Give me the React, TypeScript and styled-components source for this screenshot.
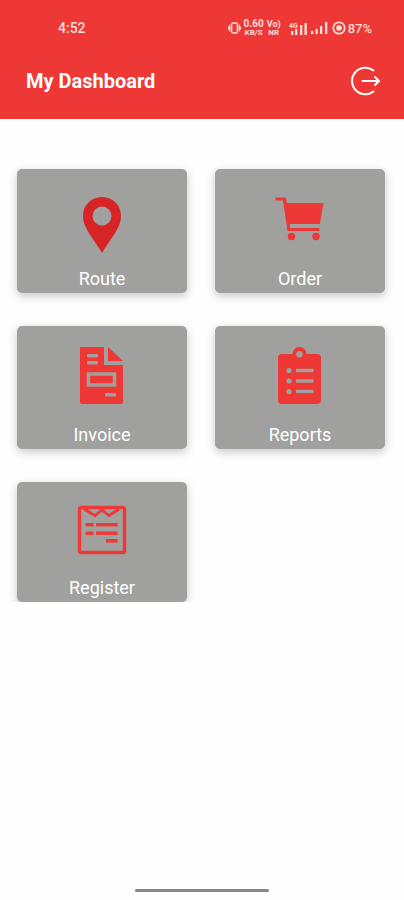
import React from "react";
import styled, { createGlobalStyle } from "styled-components";

const red = "#ee3835";
const grey = "#a0a09f";
const pale = "#ffdfdb";

const GlobalStyle = createGlobalStyle`
  * { box-sizing: border-box; }
  body {
    margin: 0;
    background: #fefefe;
    font-family: Roboto, "Liberation Sans", sans-serif;
  }
`;

const Page = styled.div`
  display: flex;
  flex-direction: column;
  min-height: 100vh;
`;

const Header = styled.header`
  background: ${red};
  padding: 16px 23px 20px 26px;
`;

const StatusBar = styled.div`
  display: flex;
  align-items: center;
  justify-content: space-between;
  height: 24px;
  padding: 0 9px 0 32px;
  color: ${pale};
`;

const Clock = styled.time`
  font-size: 14px;
  line-height: 24px;
  font-weight: 500;
`;

const StatusIcons = styled.div`
  display: flex;
  align-items: center;
  svg { display: block; }
`;

const Stack = styled.span<{ $left: number; $right: number }>`
  display: flex;
  flex-direction: column;
  align-items: center;
  margin: 0 ${(p) => p.$right}px 0 ${(p) => p.$left}px;
  font-weight: 700;
`;

const Tiny = styled.span<{ $size: number }>`
  font-size: ${(p) => p.$size}px;
  line-height: ${(p) => p.$size}px;
`;

const Battery = styled.span`
  margin-left: 2px;
  font-size: 13px;
  font-weight: 500;
`;

const TitleBar = styled.div`
  display: flex;
  align-items: center;
  justify-content: space-between;
  margin-top: 23px;
  height: 36px;
`;

const Title = styled.h1`
  margin: 0;
  color: #fff;
  font-size: 20px;
  line-height: 28px;
  font-weight: 700;
`;

const LogoutButton = styled.button`
  display: flex;
  padding: 0;
  border: 0;
  background: none;
  color: #fff;
  cursor: pointer;
`;

const Menu = styled.main`
  display: grid;
  grid-template-columns: 1fr 1fr;
  column-gap: 28px;
  row-gap: 33px;
  padding: 50px 19px 0 17px;
  overflow: hidden;
`;

const Tile = styled.button<{ $height: number }>`
  display: flex;
  flex-direction: column;
  align-items: center;
  justify-content: flex-end;
  gap: 11px;
  height: ${(p) => p.$height}px;
  padding: 0 0 3px;
  border: 0;
  border-radius: 5px;
  background: ${grey};
  box-shadow: 0 3px 10px rgba(0, 0, 0, 0.22);
  color: #fff;
  font-family: inherit;
  cursor: pointer;
`;

const TileLabel = styled.span`
  font-size: 18px;
  line-height: 22px;
`;

const Footer = styled.footer`
  display: flex;
  justify-content: center;
  margin-top: auto;
  padding-bottom: 8px;
`;

const HomeIndicator = styled.div`
  width: 134px;
  height: 3px;
  border-radius: 2px;
  background: #858585;
`;

const TileIcon = ({ children }: { children: React.ReactNode }) => (
  <svg width="64" height="72" viewBox="0 0 64 72" fill={red} aria-hidden="true">
    {children}
  </svg>
);

const RouteIcon = () => (
  <TileIcon>
    <path
      fill="#d72426"
      fillRule="evenodd"
      d="M32 12C21 12 13 20.500 13 31C13 43 23 53 32 68C41 53 51 43 51 31C51 20.500 43 12 32 12ZM32 21.500A9.500 9.500 0 1 1 32 40.500A9.500 9.500 0 1 1 32 21.500Z"
    />
  </TileIcon>
);

const OrderIcon = () => (
  <TileIcon>
    <path
      fillRule="evenodd"
      d="M7.500 12.500H17.800L18.900 18H55.500L51.800 39H51V43H51.500V46H19.500L15 15.500H7.500ZM22 39V43H51V39Z"
    />
    <circle cx="23.500" cy="51.500" r="3.700" />
    <circle cx="48" cy="51.500" r="3.700" />
  </TileIcon>
);

const InvoiceIcon = () => (
  <TileIcon>
    <path d="M11 6H34V24H53V61Q53 63 51 63H12Q10 63 10 61V7Q10 6 11 6Z" />
    <path d="M38 6L53 20H38Z" />
    <g fill={grey}>
      <rect x="17" y="13" width="11" height="3.500" rx="1" />
      <rect x="17" y="20" width="11" height="3.500" rx="1" />
      <rect x="35" y="52" width="11" height="3.500" rx="1" />
    </g>
    <rect x="18.500" y="33" width="26" height="11" fill="none" stroke={grey} strokeWidth="3.500" />
  </TileIcon>
);

const ReportsIcon = () => (
  <TileIcon>
    <path
      fillRule="evenodd"
      d="M14 13H24.500A7 7 0 0 1 38.500 13H49Q53 13 53 17V59Q53 63 49 63H14Q10 63 10 59V17Q10 13 14 13ZM31.500 10A3.200 3.200 0 1 0 31.500 16.400A3.200 3.200 0 1 0 31.500 10Z"
    />
    <g fill={grey}>
      <circle cx="21" cy="29.500" r="2.600" />
      <circle cx="21" cy="40" r="2.600" />
      <circle cx="21" cy="50.500" r="2.600" />
      <rect x="28" y="27.800" width="17.500" height="3.400" />
      <rect x="28" y="38.300" width="17.500" height="3.400" />
      <rect x="28" y="48.800" width="17.500" height="3.400" />
    </g>
  </TileIcon>
);

const RegisterIcon = () => (
  <TileIcon>
    <rect x="9.500" y="13.500" width="45" height="45" rx="2" fill="none" stroke={red} strokeWidth="3.400" />
    <path d="M14 15L25 21.500L32 16L39 21.500L49 15" fill="none" stroke={red} strokeWidth="2.800" />
    <rect x="15.500" y="29" width="8" height="3.400" />
    <rect x="26" y="29" width="21.500" height="3.400" />
    <rect x="15.500" y="37.500" width="8" height="3.400" />
    <rect x="26" y="37.500" width="21.500" height="3.400" />
    <rect x="36" y="45" width="11.500" height="3.600" />
  </TileIcon>
);

const VibrateIcon = () => (
  <svg width="13" height="12" viewBox="0 0 13 12" fill="none" stroke={pale} strokeWidth="1.300" aria-hidden="true">
    <rect x="3.700" y="1" width="5.600" height="10" rx="1" />
    <path d="M1.800 2.500V9.500M11.200 2.500V9.500M.5 4.500V7.500M12.500 4.500V7.500" />
  </svg>
);

const SignalIcon = () => (
  <svg width="17" height="12" viewBox="0 0 17 12" fill={pale} aria-hidden="true">
    <rect x="0" y="9" width="2.300" height="3" />
    <rect x="4.500" y="7" width="2.300" height="5" />
    <rect x="9" y="4" width="2.300" height="8" />
    <rect x="14" y="0" width="2.300" height="12" />
  </svg>
);

const NetworkIcon = () => (
  <svg width="19" height="13" viewBox="0 0 19 13" fill={pale} aria-hidden="true">
    <text x="0" y="6" fontSize="7" fontWeight="700">4G</text>
    <rect x="2" y="9" width="2.300" height="4" />
    <rect x="6" y="7" width="2.300" height="6" />
    <rect x="11" y="3" width="2.300" height="10" />
    <rect x="15.500" y="1" width="2.300" height="12" />
  </svg>
);

const BatteryIcon = () => (
  <svg width="14" height="14" viewBox="0 0 14 14" aria-hidden="true">
    <circle cx="7" cy="7" r="5.700" fill="none" stroke={pale} strokeWidth="1.700" />
    <circle cx="7" cy="7" r="2.800" fill={pale} />
  </svg>
);

const LogoutIcon = () => (
  <svg
    width="30"
    height="30"
    viewBox="0 0 30 30"
    fill="none"
    stroke="currentColor"
    strokeWidth="2"
    strokeLinecap="round"
    strokeLinejoin="round"
    aria-hidden="true"
  >
    <path d="M22.500 4.500A13.300 13.300 0 1 0 22.500 25.500" />
    <path d="M11.500 15H27.500M24 11L28 15L24 19" />
  </svg>
);

const items = [
  { label: "Route", Icon: RouteIcon, height: 124 },
  { label: "Order", Icon: OrderIcon, height: 124 },
  { label: "Invoice", Icon: InvoiceIcon, height: 123 },
  { label: "Reports", Icon: ReportsIcon, height: 123 },
  { label: "Register", Icon: RegisterIcon, height: 120 },
];

export default function App() {
  return (
    <Page>
      <GlobalStyle />
      <Header>
        <StatusBar>
          <Clock>4:52</Clock>
          <StatusIcons>
            <VibrateIcon />
            <Stack $left={3} $right={3}>
              <Tiny $size={10}>0.60</Tiny>
              <Tiny $size={8}>KB/S</Tiny>
            </Stack>
            <Stack $left={0} $right={8}>
              <Tiny $size={9}>Vo)</Tiny>
              <Tiny $size={8}>NR</Tiny>
            </Stack>
            <NetworkIcon />
            <Stack $left={3} $right={4}>
              <SignalIcon />
            </Stack>
            <BatteryIcon />
            <Battery>87%</Battery>
          </StatusIcons>
        </StatusBar>
        <TitleBar>
          <Title>My Dashboard</Title>
          <LogoutButton type="button" aria-label="Log out">
            <LogoutIcon />
          </LogoutButton>
        </TitleBar>
      </Header>
      <Menu>
        {items.map(({ label, Icon, height }) => (
          <Tile key={label} type="button" $height={height}>
            <Icon />
            <TileLabel>{label}</TileLabel>
          </Tile>
        ))}
      </Menu>
      <Footer>
        <HomeIndicator />
      </Footer>
    </Page>
  );
}
